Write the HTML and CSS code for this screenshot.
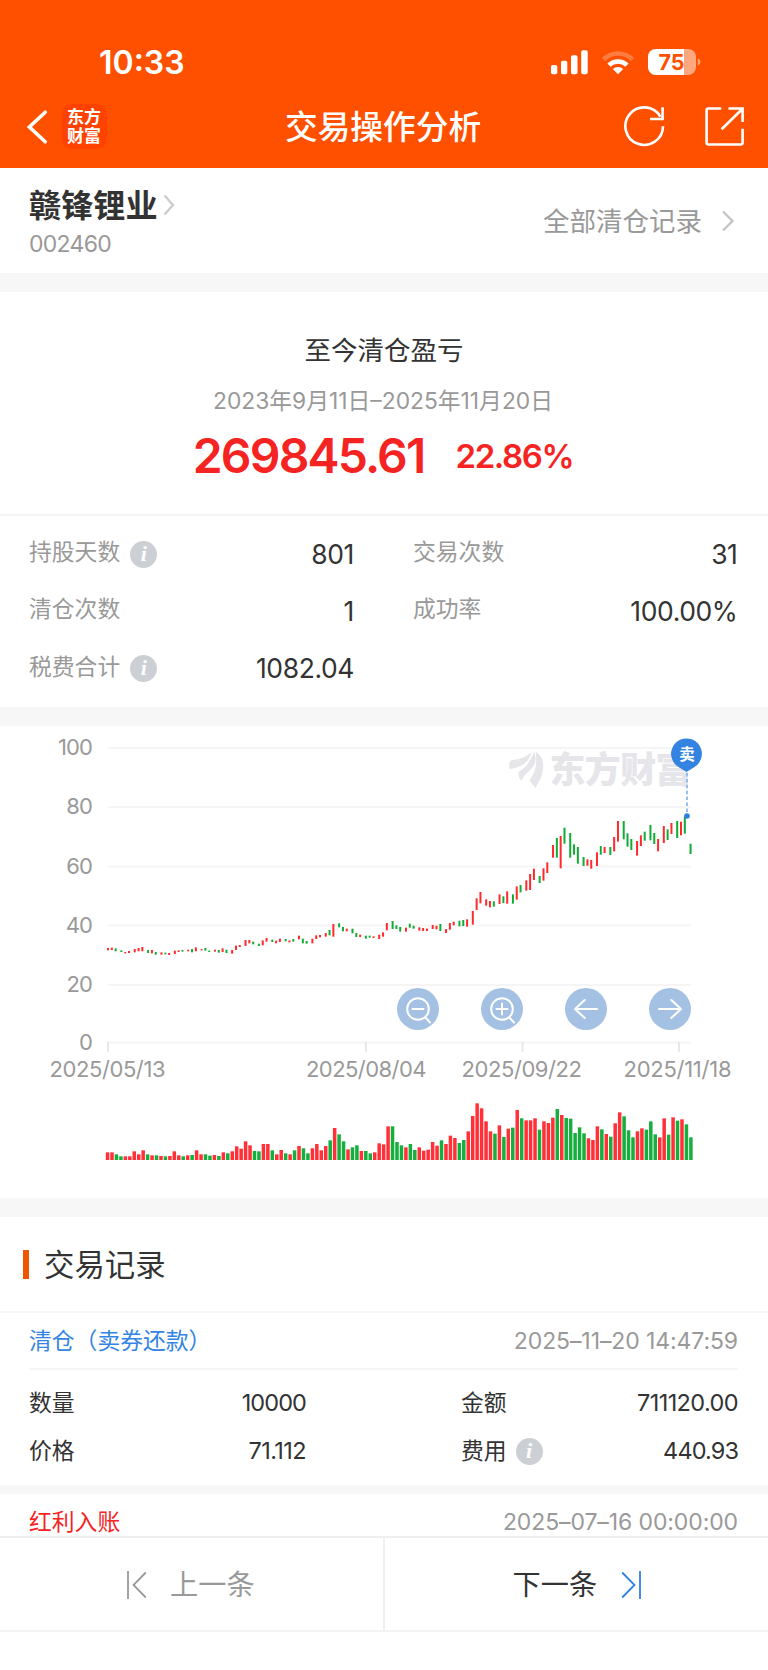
FILE: index.html
```html
<!DOCTYPE html>
<html lang="zh-CN">
<head>
<meta charset="utf-8">
<title>交易操作分析</title>
<link rel="stylesheet" href="styles.css">
</head>
<body>
<div class="screen">
  <header class="header">
    <div class="status">
      <span class="clock">10:33</span>
      <svg class="status-icons" width="152" height="30" viewBox="550 47 152 30">
        <g fill="#fff">
          <rect x="551" y="65" width="6.3" height="9.3" rx="1.8"/>
          <rect x="561" y="60.7" width="6.3" height="13.6" rx="1.8"/>
          <rect x="571" y="55.3" width="6.5" height="19" rx="1.8"/>
          <rect x="581.2" y="50.2" width="6.5" height="24.1" rx="1.8"/>
        </g>
        <path d="M603.500 59.500a20.500 20.500 0 0 1 29 0" fill="none" stroke="#fff" stroke-opacity=".25" stroke-width="4.600"/>
        <path d="M609 65.200a12.700 12.700 0 0 1 18 0" fill="none" stroke="#fff" stroke-width="4.600"/>
        <path d="M618 74.300l-5.200-5.200a7.600 7.600 0 0 1 10.400 0z" fill="#fff"/>
        <rect x="648" y="49" width="48" height="26" rx="8" fill="#fff" fill-opacity=".5"/>
        <path d="M656 49h28v26h-28a8 8 0 0 1-8-8V57a8 8 0 0 1 8-8z" fill="#fff"/>
        <path d="M697.800 58.200q2.600 1.200 2.600 3.800t-2.600 3.800z" fill="#fff" fill-opacity=".5"/>
        <text class="battery-text" x="671.500" y="70" text-anchor="middle" textLength="26">75</text>
      </svg>
    </div>
    <nav class="nav">
      <svg class="back" width="22" height="38" viewBox="26 108 22 38"><path d="M45.200 112.200L29.400 127l15.800 14.800" fill="none" stroke="#fff" stroke-width="3.600" stroke-linecap="round" stroke-linejoin="miter"/></svg>
      <div class="logo"><span>东方</span><span>财富</span></div>
      <h1 class="title">交易操作分析</h1>
      <svg class="nav-icons" width="122" height="44" viewBox="623 104 122 44" fill="none" stroke="#fff" stroke-width="2.600">
        <path d="M663 126.200a18.800 18.800 0 1 1-2.600-9.600M662.600 107.300v12.200M650 119h13.800"/>
        <path d="M721.300 108.500H708.600q-2 0-2 2v32q0 2 2 2H740.600q2 0 2-2V128.700M728.500 108.500H742.600V122M742 109.300L721.600 129.200"/>
      </svg>
    </nav>
  </header>

  <section class="stock">
    <div>
      <div class="stock-name">赣锋锂业<svg width="12" height="24" viewBox="0 0 12 24"><path d="M1.500 2.500L10 12l-8.500 9.500" fill="none" stroke="#ccc" stroke-width="2.300"/></svg></div>
      <div class="stock-code">002460</div>
    </div>
    <div class="all-records">全部清仓记录<svg width="14" height="24" viewBox="0 0 14 24"><path d="M2 2.500L11.500 12 2 21.500" fill="none" stroke="#c4c4c4" stroke-width="2.300"/></svg></div>
  </section>

  <section class="profit">
    <h2 class="profit-title">至今清仓盈亏</h2>
    <div class="profit-range">2023年9月11日–2025年11月20日</div>
    <div class="profit-values"><span class="amount">269845.61</span><span class="percent">22.86%</span></div>
  </section>

  <section class="stats">
    <div class="stat"><span class="label">持股天数</span><i class="info">i</i><span class="value">801</span></div>
    <div class="stat"><span class="label">交易次数</span><span class="value">31</span></div>
    <div class="stat"><span class="label">清仓次数</span><span class="value">1</span></div>
    <div class="stat"><span class="label">成功率</span><span class="value">100.00%</span></div>
    <div class="stat"><span class="label">税费合计</span><i class="info">i</i><span class="value">1082.04</span></div>
  </section>

  <section class="chart">
    <svg id="plot" width="768" height="472" viewBox="0 726 768 472">
      <g id="grid" stroke="#f5f5f6" stroke-width="2"></g>
      <g id="axis-labels" class="axis"></g>
      <g fill="#e5e5ea">
        <path d="M509.500 769C508.500 762 510 760.500 513.500 760C521 759 526 757 531.500 752C530 760 524 767 509.500 769z"/>
        <path d="M518.500 772C527 767 531 760 534 751.500C536.500 758 536 764 532 768C528 772 524 775 521.500 781C519.500 778 518 776 518.500 772z"/>
        <path d="M535.500 751.500C541 755 543.500 760 543 768C542.500 777 538.500 782 535.500 788L529.500 780.500C534 774 538 766 535.500 751.500z"/>
        <text class="watermark" x="549.500" y="783" textLength="142">东方财富</text>
      </g>
      <g id="candles"></g>
      <g id="volumes"></g>
      <path d="M687 773v42" stroke="#8db8ee" stroke-width="1.800" stroke-dasharray="3.500 2.400"/>
      <circle cx="687" cy="816" r="2.800" fill="#2f7fe0"/>
      <path d="M686.500 772l-8-5a15.400 15.400 0 1 1 16 0z" fill="#3583e0"/>
      <text class="pin" x="687" y="760" text-anchor="middle">卖</text>
    </svg>
    <div class="tools">
      <svg viewBox="-21 -21 42 42"><circle r="10.800"/><path d="M-5.500 0H5.500M7.300 8.300L12 13.500"/></svg>
      <svg viewBox="-21 -21 42 42"><circle r="10.800"/><path d="M-5.500 0H5.500M0 -5.500V5.500M7.300 8.300L12 13.500"/></svg>
      <svg viewBox="-21 -21 42 42"><path d="M11 0H-11M-1.300 -9L-11 0L-1.300 9"/></svg>
      <svg viewBox="-21 -21 42 42"><path d="M-11 0H11M1.300 -9L11 0L1.300 9"/></svg>
    </div>
  </section>

  <section class="records">
    <h2 class="records-title">交易记录</h2>
    <article class="record">
      <div class="record-head"><span class="type sell">清仓（卖券还款）</span><time>2025–11–20 14:47:59</time></div>
      <div class="record-body">
        <div class="pair"><span>数量</span><b>10000</b></div>
        <div class="pair"><span>金额</span><b class="loose">711120.00</b></div>
        <div class="pair"><span>价格</span><b class="loose">71.112</b></div>
        <div class="pair"><span>费用</span><i class="info">i</i><b>440.93</b></div>
      </div>
    </article>
    <article class="record clipped">
      <div class="record-head"><span class="type bonus">红利入账</span><time>2025–07–16 00:00:00</time></div>
    </article>
  </section>

  <footer class="pager">
    <div class="prev"><svg width="20" height="28" viewBox="0 0 20 28" fill="none" stroke="#999" stroke-width="1.800"><path d="M1 0v28M18.800 1.500L6.500 14l12.300 12.500"/></svg>上一条</div>
    <div class="next">下一条<svg width="20" height="28" viewBox="0 0 20 28" fill="none" stroke="#2f80e4" stroke-width="1.800"><path d="M19 0v28M1.200 1.500L13.500 14 1.200 26.500"/></svg></div>
  </footer>
</div>
<script src="chart.js"></script>
</body>
</html>
```
FILE: styles.css
```css
* { box-sizing: border-box; }
body { margin: 0; background: #fff; color: #333; font-family: Inter, "Noto Sans CJK SC", sans-serif; }
h1, h2 { margin: 0; font-weight: 400; }
svg { display: block; flex: none; }
.screen { width: 768px; height: 1670px; overflow: hidden; display: flex; flex-direction: column; }

.header { height: 168px; flex: none; background: #ff5000; color: #fff; }
.status { height: 86px; padding: 47px 66px 0 99px; display: flex; justify-content: space-between; }
.clock { font-size: 32px; line-height: 32px; font-weight: 600; }
.battery-text { font-size: 21.500px; font-weight: 700; fill: #ff5000; }
.nav { height: 82px; padding: 0 23px 0 26px; display: flex; align-items: center; }
.logo { width: 45px; height: 45px; margin: -1px 0 0 14px; padding: 4px 1px 0 0; border-radius: 10px; background: #ff4200; display: flex; flex-direction: column; align-items: center; font-size: 17px; line-height: 19px; font-weight: 700; }
.title { flex: 1; padding-left: 178px; font-size: 32.700px; line-height: 40px; font-weight: 500; white-space: nowrap; }
.nav-icons { margin-top: -3px; }

.stock { height: 105px; flex: none; padding: 0 33px 0 29px; display: flex; justify-content: space-between; align-items: center; }
.stock-name { margin-top: 3px; display: flex; align-items: center; gap: 5px; font-size: 32.200px; line-height: 40px; font-weight: 700; }
.stock-name svg { margin-top: -2px; }
.stock-code { margin-top: 3px; font-size: 23px; line-height: 30px; letter-spacing: -.700px; color: #999; }
.all-records { display: flex; align-items: center; gap: 19px; font-size: 26.500px; line-height: 32px; color: #999; }

.profit { height: 243px; flex: none; padding-top: 40px; border-top: 19px solid #f7f7f7; border-bottom: 2px solid #f5f5f5; text-align: center; }
.profit-title { font-size: 26.500px; line-height: 36px; }
.profit-range { margin: 17.500px 2px 0 0; font-size: 22.800px; line-height: 30px; color: #999; }
.profit-values { margin: 10.500px 2px 0 0; display: flex; justify-content: center; align-items: center; gap: 31px; line-height: 60px; color: #f62323; }
.amount { font-size: 48px; font-weight: 600; letter-spacing: -1.800px; }
.percent { font-size: 33px; font-weight: 600; letter-spacing: -1.400px; }

.stats { height: 191px; flex: none; padding: 9px 30.500px 0 29px; display: grid; grid-template-columns: 325px 324.500px; column-gap: 59px; grid-auto-rows: 57.300px; }
.stat { display: flex; align-items: center; }
.label { margin-top: -3px; font-size: 22.800px; line-height: 30px; color: #999; }
.value { margin-left: auto; font-size: 26.500px; letter-spacing: -.400px; }
.info { width: 27px; height: 27px; margin: 1px 0 0 10px; border-radius: 50%; background: #ccd0d5; color: #fff; font: italic 700 22px/26px "Liberation Serif", serif; text-align: center; }

.chart { height: 491px; flex: none; border-top: 19px solid #f7f7f7; position: relative; }
.axis { font-size: 22px; fill: #999; }
.axis .y { letter-spacing: -.900px; }
.watermark { font-family: "Noto Sans CJK SC", sans-serif; font-size: 36px; font-weight: 900; }
.pin { font-family: "Noto Sans CJK SC", sans-serif; font-size: 15.500px; font-weight: 700; fill: #fff; }
.tools { position: absolute; left: 396.500px; top: 261.500px; display: flex; gap: 42px; }
.tools svg { width: 42px; height: 42px; border-radius: 50%; background: #a4c1e4; fill: none; stroke: #fff; stroke-width: 2; stroke-linecap: round; stroke-linejoin: round; }

.records { height: 338px; flex: none; overflow: hidden; border-top: 19px solid #f7f7f7; }
.records-title { height: 94px; padding: 1px 0 0 23px; display: flex; align-items: center; gap: 15px; font-size: 30.400px; line-height: 40px; }
.records-title::before { content: ""; width: 6px; height: 29px; background: #f05600; }
.record { border-top: 2px solid #f6f6f6; padding: 0 30px 0 29px; }
.record-head { height: 57px; display: flex; justify-content: space-between; align-items: center; border-bottom: 2px solid #f6f6f6; font-size: 22.800px; line-height: 30px; }
.record-head time { color: #999; font-size: 23px; letter-spacing: -.100px; }
.sell { color: #3484e4; }
.bonus { color: #f62323; }
.record-body { height: 115px; padding-top: 9px; display: grid; grid-template-columns: 277px 277px; column-gap: 155px; grid-auto-rows: 48px; }
.pair { display: flex; align-items: center; font-size: 22.800px; line-height: 30px; }
.pair .info { margin-left: 9px; margin-top: 0; }
.pair b { margin-left: auto; font-weight: 400; font-size: 23.500px; letter-spacing: -.900px; }
.pair .loose { letter-spacing: -.600px; }
.clipped { border-top: 9px solid #f7f7f7; }
.clipped .record-head { height: 57px; }

.pager { height: 96px; flex: none; display: flex; border-top: 2px solid #efefef; border-bottom: 2px solid #f3f3f3; font-size: 28.200px; line-height: 36px; }
.pager > div { width: 384px; padding-top: 2px; display: flex; align-items: center; }
.pager > .prev { width: 385px; padding-left: 127px; gap: 23px; color: #999; border-right: 2px solid #efefef; }
.next { padding-left: 128px; gap: 24px; }
```
FILE: chart.js
```js
// Session colours, candle extents (1/3 px from y=900) and volume tops (1/3 px below y=1090).
const colors = [
  "RRGGRRRRRG", "RGRGRRRGRG", "RRGGRGRGRR", "RRRGGRRGRR", "GRGRGGRRRR", "GRGGRGGRGG", "RRRRGGGRGG",
  "RRRRRGRRRG", "GRRRRRRGRG", "RGRGRRRGRR", "RGRGGGGGRR", "RGRGRRGGGR", "RGGGRRGRGR", "GG"
].join("");
const extents = `144-151 143-150 145-154 151-156 156-160 153-159 147-157 144-154 141-154 150-159 150-160 156-164
157-164 158-163 159-165 152-162 151-156 150-155 149-154 147-157 142-154 147-151 144-152 152-156 149-155 150-158 145-156 149-159
150-161 137-150 135-141 120-138 120-130 125-133 131-138 121-136 114-125 119-126 122-130 116-126 117-124 121-127 117-125 107-118
116-130 123-131 116-130 106-117 105-112 99-110 90-106 72-110 70-82 81-94 86-94 86-100 99-111 104-111 107-116 107-113
109-114 104-117 97-110 69-91 63-87 76-87 81-95 83-95 71-83 77-86 82-92 84-93 86-93 75-87 77-88 72-93
87-99 69-89 65-76 62-79 60-78 58-80 33-74 -5-30 -24-10 -2-17 3-22 4-20 -17-12 -11-9 -26-11 -17-11
-41--1 -45--23 -59--28 -78--30 -94--60 -72--51 -95--58 -113--81 -165--127 -186--127 -192--95 -217--169 -201--127 -167--136 -159--109 -129--102
-122--103 -120--94 -143--102 -162--136 -159--141 -159--135 -189--146 -237--175 -237--182 -200--160 -183--150 -177--133 -194--162 -205--178 -225--179 -201--168
-183--146 -222--171 -212--180 -231--198 -237--186 -235--194 -250--199 -169--138`.split(/\s+/).map(s => {
  const m = s.match(/^(-?\d+)-(-?\d+)$/);
  return [900 + m[1] / 3, 900 + m[2] / 3];
});
const volumes = [187,187,193,199,199,199,184,193,181,193,196,196,198,199,198,184,196,199,196,195,181,193,193,197,195,198,187,190,184,169,176,154,166,183,184,162,162,181,193,180,190,193,181,168,175,190,175,162,181,168,151,114,133,154,178,172,166,183,183,190,187,160,163,109,109,156,166,172,162,180,172,182,179,156,167,151,162,137,144,159,150,124,78,40,55,94,124,131,106,141,116,113,60,85,91,91,85,119,94,99,83,57,75,84,86,129,112,130,145,150,109,118,132,140,100,67,79,121,142,124,115,119,94,133,142,85,134,82,92,88,103,142];

const NS = "http://www.w3.org/2000/svg";
const add = (parent, tag, attrs, text) => {
  const el = document.createElementNS(NS, tag);
  for (const k in attrs) el.setAttribute(k, attrs[k]);
  if (text) el.textContent = text;
  document.getElementById(parent).appendChild(el);
};

[[748, "100"], [807, "80"], [866.500, "60"], [925.500, "40"], [985, "20"], [1042.500, "0"]].forEach(([y, t]) => {
  add("grid", "path", { d: `M108 ${y}H691` });
  add("axis-labels", "text", { class: "y", x: 92, y: y + 7.200, "text-anchor": "end" }, t);
});
[[108, 49.500, 116, "2025/05/13"], [366, 306, 120.500, "2025/08/04"], [522.500, 461.500, 120.500, "2025/09/22"], [679, 623.500, 108, "2025/11/18"]].forEach(([x, left, w, t]) => {
  add("grid", "path", { d: `M${x} 1042V1052`, stroke: "#e8e8ea" });
  add("axis-labels", "text", { x: left, y: 1076.500, textLength: w }, t);
});

const hex = { R: ["#ff2a2e", "#ff3037"], G: ["#12ab36", "#16ae3c"] };
// Candles fall on a 1.91px raster, which gives the uneven 2-2-3 spacing.
extents.forEach(([top, bottom], i) => {
  const x = 108 + Math.floor(i * 2.329 + 0.11) * 1.91;
  add("candles", "rect", { x: x - 1, y: top, width: 2, height: bottom - top, fill: hex[colors[i]][0] });
});
volumes.forEach((v, i) => {
  const x = 107.700 + i * 4.453, top = 1090 + v / 3;
  add("volumes", "rect", { x: x - 1.900, y: top, width: 3.500, height: 1160 - top, fill: hex[colors[i]][1] });
});
```
